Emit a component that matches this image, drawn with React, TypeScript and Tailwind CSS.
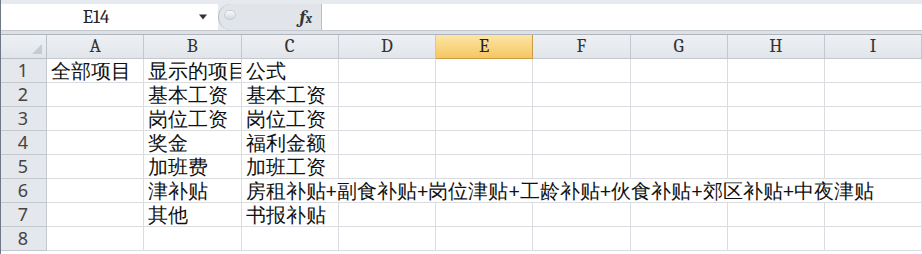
const COLS = ["A", "B", "C", "D", "E", "F", "G", "H", "I"];

type Row = { n: number; a?: string; b?: string; c?: string; long?: boolean };

const ROWS: Row[] = [
  { n: 1, a: "全部项目", b: "显示的项目", c: "公式" },
  { n: 2, b: "基本工资", c: "基本工资" },
  { n: 3, b: "岗位工资", c: "岗位工资" },
  { n: 4, b: "奖金", c: "福利金额" },
  { n: 5, b: "加班费", c: "加班工资" },
  { n: 6, b: "津补贴", c: "房租补贴+副食补贴+岗位津贴+工龄补贴+伙食补贴+郊区补贴+中夜津贴", long: true },
  { n: 7, b: "其他", c: "书报补贴" },
  { n: 8 },
];

const cell =
  "border-r border-b border-[#dadcdf] h-[24px] overflow-hidden whitespace-nowrap pl-[4px] pt-[1px] text-[20px] leading-[22px] text-[#111] font-sans";
const head =
  "flex items-center justify-center h-[24px] border-r border-b text-[19px] font-serif";

function FormulaBar() {
  return (
    <div className="flex h-[31px] bg-[#e6e9ed] pt-[4px] border-b border-[#c3c8cf]">
      {/* name box */}
      <div className="flex items-center w-[218px] bg-white">
        <div className="w-[192px] text-center text-[19px] text-[#222] font-serif">E14</div>
        <svg width="10" height="6" viewBox="0 0 10 6" className="ml-[6px]">
          <path d="M1 0.5 L9 0.5 L5 5.5 Z" fill="#333" />
        </svg>
      </div>
      {/* splitter + fx */}
      <div className="relative flex items-center justify-end w-[103px] bg-[#e1e5ea] rounded-l-[14px] border-l border-[#b8bec6] pr-[9px]">
        <div className="absolute left-[5px] top-[6px] w-[12px] h-[10px] rounded-full bg-gradient-to-b from-[#fafbfc] to-[#d3d8de] border border-[#c9ced5]" />
        <span className="text-[19px] italic font-bold text-[#333] font-serif leading-none">
          f<span className="text-[13px]">x</span>
        </span>
      </div>
      <div className="flex-1 bg-white border-l border-[#b8bec6]" />
    </div>
  );
}

export default function App() {
  return (
    <div className="relative w-[922px] h-[254px] overflow-hidden bg-white">
      <FormulaBar />
      <div className="h-[4px] bg-[#dde1e6] border-b border-[#aeb5be]" />
      <div className="grid grid-cols-[47px_repeat(8,97.25px)_1fr] auto-rows-[24px]">
        {/* header row */}
        <div className="relative h-[24px] bg-gradient-to-b from-[#eef0f3] to-[#e1e5ea] border-r border-b border-[#b9bfc7]">
          <svg width="10" height="10" viewBox="0 0 10 10" className="absolute right-[4px] bottom-[4px]">
            <path d="M10 0 L10 10 L0 10 Z" fill="#c6cbd2" />
          </svg>
        </div>
        {COLS.map((c) =>
          c === "E" ? (
            <div
              key={c}
              className={`${head} bg-gradient-to-b from-[#fbe6a6] to-[#f6c65f] border-[#c99b45] text-[#222]`}
            >
              {c}
            </div>
          ) : (
            <div
              key={c}
              className={`${head} bg-gradient-to-b from-[#eef0f3] to-[#e1e5ea] border-[#c3c8cf] text-[#333]`}
            >
              {c}
            </div>
          )
        )}
        {/* data rows */}
        {ROWS.map((r) => (
          <RowCells key={r.n} r={r} />
        ))}
      </div>
      <div className="absolute left-0 top-0 bottom-0 w-[1px] bg-[#6d7785]" />
    </div>
  );
}

function RowCells({ r }: { r: Row }) {
  return (
    <>
      <div className="flex items-center justify-center h-[24px] bg-[#e4e7eb] border-r border-b border-[#c3c8cf] text-[18px] text-[#444] font-sans">
        {r.n}
      </div>
      <div className={cell}>{r.a}</div>
      <div className={cell}>{r.b}</div>
      {r.long ? (
        <div className={`${cell} col-span-7`}>{r.c}</div>
      ) : (
        <>
          <div className={cell}>{r.c}</div>
          {["D", "E", "F", "G", "H", "I"].map((k) => (
            <div key={k} className={cell} />
          ))}
        </>
      )}
    </>
  );
}
